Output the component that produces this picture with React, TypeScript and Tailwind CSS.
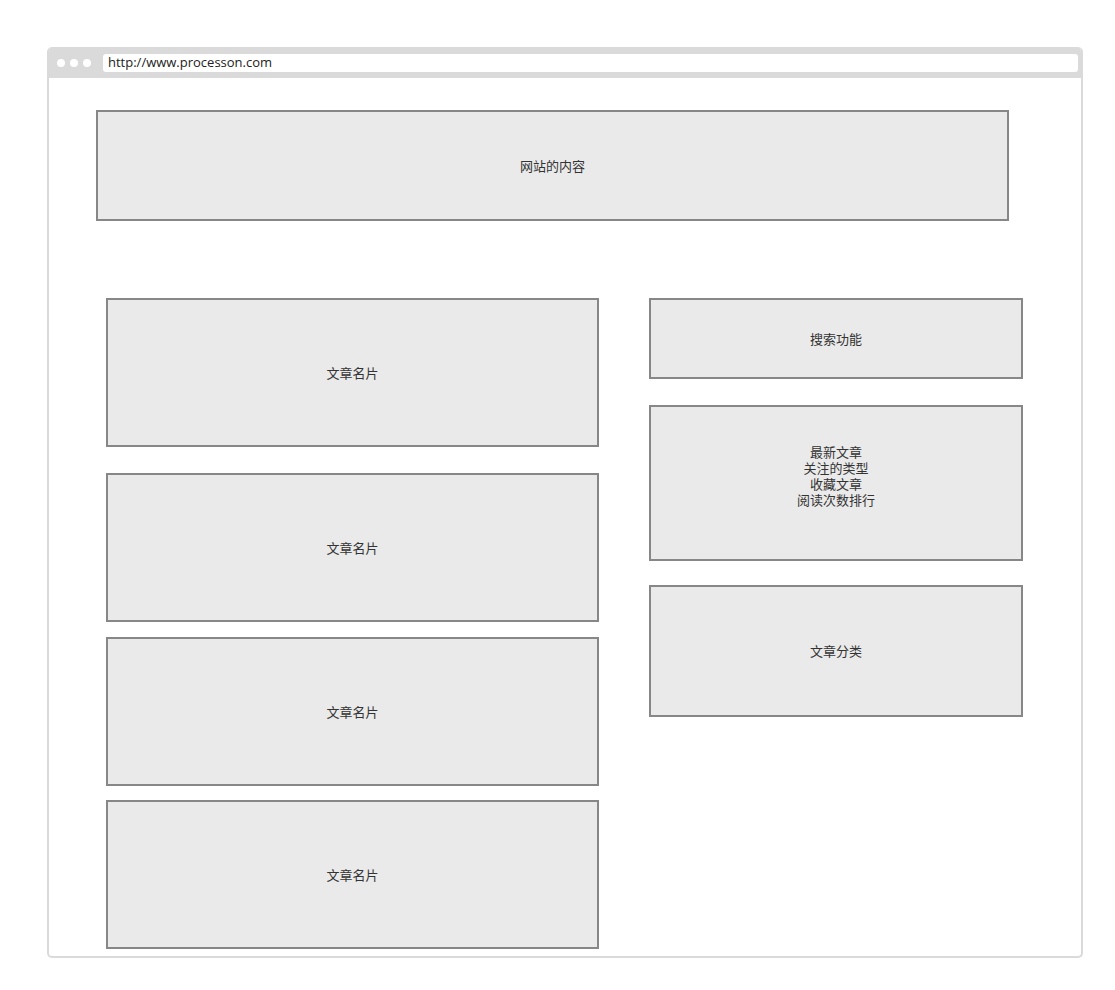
const sans = "font-['Open_Sans','Noto_Sans_CJK_SC',sans-serif]";

function Box({ className, children }: { className: string; children: React.ReactNode }) {
  return (
    <div
      className={`flex flex-col items-center justify-center border-2 border-[#878787] bg-[#eaeaea] text-[13px] leading-4 text-[#333] ${className}`}
    >
      {children}
    </div>
  );
}

export default function App() {
  return (
    <div className={`min-h-[990px] w-[1115px] bg-white pl-[47px] pt-[47px] ${sans}`}>
      {/* browser frame */}
      <div className="h-[911px] w-[1036px] overflow-hidden rounded-[5px] border-2 border-t-0 border-[#dadada]">
        <div className="flex h-[31px] items-center bg-[#dadada] pl-[8px] pr-[3px]">
          <div className="flex gap-[5px]">
            <span className="h-2 w-2 rounded-full bg-white" />
            <span className="h-2 w-2 rounded-full bg-white" />
            <span className="h-2 w-2 rounded-full bg-white" />
          </div>
          <div className="ml-[12px] flex h-[18px] flex-1 items-center rounded-[3px] bg-white pl-[5px] text-[13px] text-[#222]">
            http://www.processon.com
          </div>
        </div>

        {/* page */}
        <div className="pt-[32px]">
          <Box className="ml-[47px] h-[111px] w-[913px]">网站的内容</Box>

          <div className="ml-[57px] mt-[77px] flex gap-[50px]">
            {/* article list */}
            <div className="flex w-[493px] flex-col">
              <Box className="h-[149px]">文章名片</Box>
              <Box className="mt-[26px] h-[149px]">文章名片</Box>
              <Box className="mt-[15px] h-[149px]">文章名片</Box>
              <Box className="mt-[14px] h-[149px]">文章名片</Box>
            </div>

            {/* sidebar */}
            <div className="flex w-[374px] flex-col">
              <Box className="h-[81px]">搜索功能</Box>
              <Box className="mt-[26px] h-[156px] pb-[14px]">
                <span>最新文章</span>
                <span>关注的类型</span>
                <span>收藏文章</span>
                <span>阅读次数排行</span>
              </Box>
              <Box className="mt-[24px] h-[132px]">文章分类</Box>
            </div>
          </div>
        </div>
      </div>
    </div>
  );
}
